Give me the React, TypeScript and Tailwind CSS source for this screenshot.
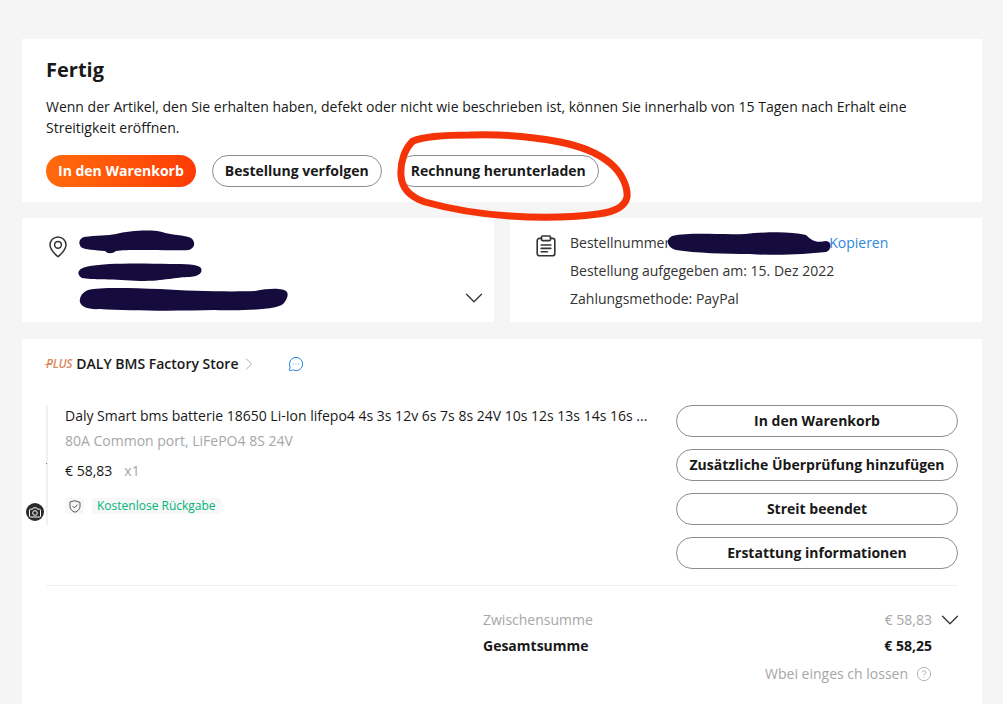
import React from "react";
import { ChevronDown, ChevronRight, CircleHelp, MessageCircleMore } from "lucide-react";

const productButtons = [
  "In den Warenkorb",
  "Zusätzliche Überprüfung hinzufügen",
  "Streit beendet",
  "Erstattung informationen",
];

const OutlineButton = ({ label }: { label: string }) => (
  <button
    type="button"
    className="h-8 rounded-full border border-[#8f8f8f] bg-white px-3 text-sm font-bold text-[#191919]"
  >
    {label}
  </button>
);

const PinIcon = () => (
  <svg className="mt-[18px] ml-[3px]" width="18" height="22" viewBox="0 0 18 22" fill="none" stroke="#333" strokeWidth="1.5" aria-hidden="true">
    <path d="M9 20.8C6.2 18.4 1 13.8 1 9A8 8 0 0 1 17 9C17 13.8 11.8 18.4 9 20.8Z" strokeLinejoin="round" />
    <circle cx="9" cy="8.8" r="3.4" />
  </svg>
);

const OrderIcon = () => (
  <svg className="mt-[6px]" width="20" height="22" viewBox="0 0 20 22" fill="none" stroke="#333" strokeWidth="1.6" strokeLinecap="round" aria-hidden="true">
    <path d="M5.5 3.4H3.4A2.2 2.2 0 0 0 1.2 5.6V18.6A2.2 2.2 0 0 0 3.4 20.8H16.6A2.2 2.2 0 0 0 18.8 18.6V5.6A2.2 2.2 0 0 0 16.6 3.4H14.5" />
    <rect x="5.5" y="1" width="9" height="4.6" rx="1" />
    <path d="M5.2 10H14.8M5.2 13.4H14.8M5.2 16.8H11.4" />
  </svg>
);

const ShieldIcon = () => (
  <svg width="12" height="13" viewBox="0 0 12 13" fill="none" stroke="#555" strokeWidth="1" strokeLinecap="round" strokeLinejoin="round" aria-hidden="true">
    <path d="M6 .8L11 2.4V6.4C11 9.4 8.6 11.4 6 12.2C3.4 11.4 1 9.4 1 6.4V2.4Z" />
    <path d="M3.8 6.3L5.4 7.9L8.3 4.9" />
  </svg>
);

const CameraIcon = () => (
  <svg width="12" height="11" viewBox="0 0 12 11" fill="none" stroke="#fff" strokeWidth="1" strokeLinejoin="round" aria-hidden="true">
    <path d="M1.5 2.2H3.6L4.4 .8H7.6L8.4 2.2H10.5A1 1 0 0 1 11.5 3.2V9A1 1 0 0 1 10.5 10H1.5A1 1 0 0 1 .5 9V3.2A1 1 0 0 1 1.5 2.2Z" />
    <circle cx="6" cy="6" r="2.3" />
  </svg>
);

// the scribbles somebody painted on the screenshot
const Scribbles = () => (
  <svg className="pointer-events-none absolute left-0 top-0" width="1003" height="704" fill="none" aria-hidden="true">
    <path
      d="M413 141C425 136 445 135 470 135C500 134 530 136 560 142C580 146 598 153 610 163C621 172 628 186 627 197C625 207 614 212 598 214C575 217 540 218 510 216C480 214 450 209 425 202C410 197 402 188 401 176C400 162 405 148 413 141Z"
      stroke="#f43408"
      strokeWidth="7"
    />
    <g fill="#150b3d">
      <path d="M84 237C96 235 108 236 116 234C128 231 150 229 162 232C170 235 185 235 191 238C196 242 195 248 189 250C170 251 130 249 116 251C112 254 108 254 105 251C96 250 84 250 81 247C78 243 79 239 84 237Z" />
      <path d="M90 266C105 263 140 263 170 264C185 264 198 264 201 268C203 273 199 276 190 277C175 277 165 281 140 281C115 279 90 280 82 278C76 274 77 268 90 266Z" />
      <path d="M88 290C100 287 130 288 160 289C190 291 230 292 255 291C270 288 284 288 287 292C289 296 286 300 284 303C280 310 240 311 215 310C180 311 130 311 100 309C88 310 78 306 80 299C81 294 84 292 88 290Z" />
      <path d="M672 236C690 232 720 235 745 234C765 232 790 231 806 235C812 241 816 243 826 241C832 241 832 250 826 252C805 254 780 256 750 254C725 254 695 253 676 250C666 247 666 239 672 236Z" />
    </g>
  </svg>
);

const App = () => {
  return (
    <div className="relative h-[704px] w-[1003px] overflow-hidden bg-[#f5f5f5] font-['Open_Sans',sans-serif] text-sm text-[#191919]">
      <div className="flex flex-col gap-4 pl-[22px] pr-[21px] pt-[39px]">
        <section className="h-[163px] bg-white px-6 pt-[17px]">
          <h1 className="text-xl leading-[28px] font-bold">Fertig</h1>
          <p className="mt-3 text-sm leading-[21px]">
            Wenn der Artikel, den Sie erhalten haben, defekt oder nicht wie beschrieben ist, können Sie innerhalb von 15 Tagen nach Erhalt eine Streitigkeit eröffnen.
          </p>
          <div className="mt-[17px] flex gap-4">
            <button
              type="button"
              className="h-8 rounded-full bg-gradient-to-r from-[#ff6a0c] to-[#fd3a05] px-3 text-sm font-bold text-white"
            >
              In den Warenkorb
            </button>
            <OutlineButton label="Bestellung verfolgen" />
            <OutlineButton label="Rechnung herunterladen" />
          </div>
        </section>

        <div className="flex gap-4">
          <section className="flex h-[104px] w-[472px] bg-white pl-6 pr-[5px]">
            <PinIcon />
            <div className="flex flex-1 items-end justify-end pb-[9px]">
              <ChevronDown className="h-[30px] w-[30px] text-[#333]" strokeWidth={1} aria-hidden="true" />
            </div>
          </section>
          <section className="flex h-[104px] flex-1 gap-[14px] bg-white pl-[26px] pt-[11px]">
            <OrderIcon />
            <div className="leading-[28px] text-[#333]">
              <div className="flex">
                <span>Bestellnummer</span>
                <span className="ml-[159px] text-[#2e86de]">Kopieren</span>
              </div>
              <div>Bestellung aufgegeben am: 15. Dez 2022</div>
              <div>Zahlungsmethode: PayPal</div>
            </div>
          </section>
        </div>

        <section className="mt-px bg-white px-6 pb-6">
          <div className="flex h-[50px] items-center">
            <span className="relative mr-1 text-[12px] font-semibold italic tracking-[-0.3px] text-[#d98a5e]">
              PLUS
              <span className="absolute left-[-1px] top-[9px] h-px w-[7px] bg-[#d98a5e]" />
            </span>
            <span className="font-semibold">DALY BMS Factory Store</span>
            <ChevronRight className="ml-px h-5 w-5 text-[#999]" strokeWidth={1} aria-hidden="true" />
            <MessageCircleMore className="ml-[29px] h-4 w-4 text-[#2e86de]" strokeWidth={1.5} aria-hidden="true" />
          </div>

          <div className="mt-4 flex justify-between border-b border-[#f0f0f0] pb-4">
            <div className="flex h-[120px] w-[602px]">
              <div className="flex w-[2px] flex-col bg-[#f0f0f0]">
                <div className="mt-[58px] h-px w-px bg-[#d0613a]" />
              </div>
              <div className="ml-[17px] min-w-0 flex-1">
                <div className="whitespace-nowrap leading-[22px]">
                  Daly Smart bms batterie 18650 Li-Ion lifepo4 4s 3s 12v 6s 7s 8s 24V 10s 12s 13s 14s 16s ...
                </div>
                <div className="mt-[3px] leading-[22px] text-[#a6a6a6]">80A Common port, LiFePO4 8S 24V</div>
                <div className="mt-2 flex leading-[22px]">
                  <span>€ 58,83</span>
                  <span className="ml-3 text-[#a6a6a6]">x1</span>
                </div>
                <div className="mt-4 flex items-center gap-2">
                  <span className="flex h-4 w-[19px] items-center justify-center rounded-sm bg-[#f7f7f7]">
                    <ShieldIcon />
                  </span>
                  <span className="rounded-sm bg-[#f7f7f7] px-[5px] text-xs leading-4 text-[#00b578]">Kostenlose Rückgabe</span>
                </div>
              </div>
            </div>
            <div className="flex w-[282px] flex-col gap-3">
              {productButtons.map((label) => (
                <OutlineButton key={label} label={label} />
              ))}
            </div>
          </div>

          <div className="ml-[437px] mr-[26px] pt-[22px]">
            <div className="relative flex justify-between leading-[24px] text-[#a6a6a6]">
              <span>Zwischensumme</span>
              <span>€ 58,83</span>
              <ChevronDown className="absolute -right-[33px] -top-[3px] h-[30px] w-[30px] text-[#333]" strokeWidth={1} aria-hidden="true" />
            </div>
            <div className="mt-[2px] flex justify-between leading-[24px] font-bold">
              <span>Gesamtsumme</span>
              <span>€ 58,25</span>
            </div>
            <div className="mt-1 flex items-center justify-end gap-2 leading-[24px] text-[#a6a6a6]">
              <span>Wbei einges ch lossen</span>
              <CircleHelp className="h-4 w-4" strokeWidth={1.25} aria-hidden="true" />
            </div>
          </div>
        </section>
      </div>

      <div className="absolute left-[26px] top-[503px] flex h-[18px] w-[18px] items-center justify-center rounded-full bg-[#2a2a2a]">
        <CameraIcon />
      </div>
      <Scribbles />
    </div>
  );
};

export default App;
